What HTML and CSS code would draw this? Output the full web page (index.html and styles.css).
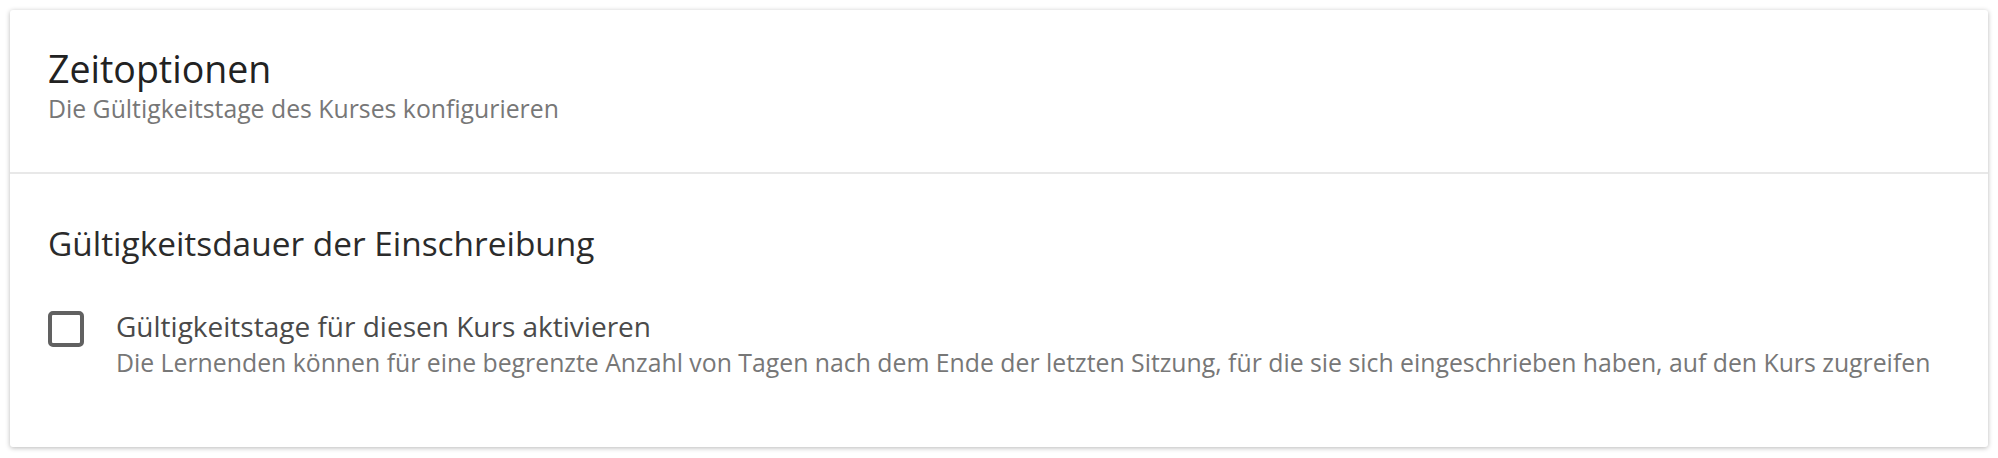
FILE: index.html
```html
<!DOCTYPE html>
<html lang="de">
<head>
    <meta charset="UTF-8">
    <meta name="viewport" content="width=device-width, initial-scale=1.0">
    <title>Zeitoptionen</title>
    <link rel="stylesheet" href="styles.css">
</head>
<body>
    <div class="page">
        <div class="card">
            <!-- Kopfbereich -->
            <header class="card-header">
                <h1 class="card-title">Zeitoptionen</h1>
                <p class="card-subtitle">Die Gültigkeitstage des Kurses konfigurieren</p>
            </header>

            <!-- Einschreibung -->
            <section class="card-body">
                <h2 class="section-title">Gültigkeitsdauer der Einschreibung</h2>

                <label class="option">
                    <input type="checkbox" class="option-input">
                    <span class="checkbox"></span>
                    <span class="option-text">
                        <span class="option-label">Gültigkeitstage für diesen Kurs aktivieren</span>
                        <span class="option-help">Die Lernenden können für eine begrenzte Anzahl von Tagen nach dem Ende der letzten Sitzung, für die sie sich eingeschrieben haben, auf den Kurs zugreifen</span>
                    </span>
                </label>
            </section>
        </div>
    </div>
</body>
</html>
```

FILE: styles.css
```css
* {
    margin: 0;
    padding: 0;
    box-sizing: border-box;
}

body {
    background-color: #fff;
    font-family: 'Open Sans', 'Noto Sans', sans-serif;
    color: #333;
}

.page {
    padding: 10px;
}

.card {
    background-color: #fff;
    border-radius: 3px;
    box-shadow: 0 1px 5px rgba(0, 0, 0, 0.28);
    height: 437px;
}

.card-header {
    padding: 37px 38px 47px;
    border-bottom: 2px solid #e8e8e8;
}

.card-title {
    font-size: 37.5px;
    line-height: 44px;
    font-weight: 400;
    color: #222;
}

.card-subtitle {
    font-size: 24.8px;
    line-height: 34px;
    color: #777;
}

.card-body {
    padding: 47px 38px 0;
}

.section-title {
    font-size: 33.4px;
    line-height: 44px;
    font-weight: 400;
    color: #2b2b2b;
}

.option {
    display: flex;
    align-items: flex-start;
    margin-top: 41px;
    cursor: pointer;
}

.option-input {
    display: none;
}

.checkbox {
    flex: 0 0 auto;
    width: 36px;
    height: 36px;
    margin-top: 5px;
    margin-right: 32px;
    border: 4px solid #616161;
    border-radius: 5px;
}

.option-input:checked + .checkbox {
    background-color: #616161;
}

.option-text {
    display: flex;
    flex-direction: column;
}

.option-label {
    font-size: 28px;
    line-height: 40px;
    color: #4a4a4a;
}

.option-help {
    margin-top: -1px;
    font-size: 24.8px;
    line-height: 34px;
    color: #777;
}
```
